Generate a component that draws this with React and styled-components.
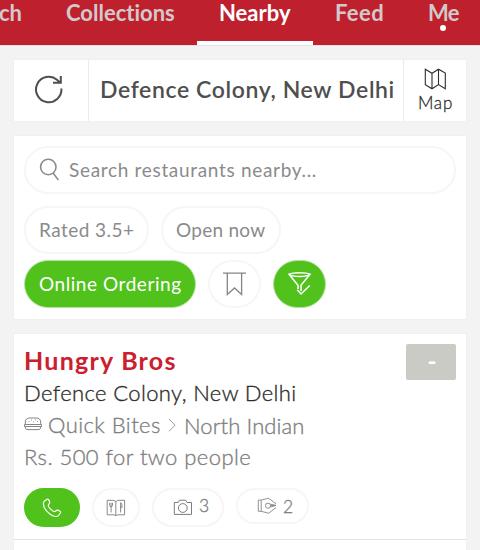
import React from 'react';
import styled, { createGlobalStyle } from 'styled-components';

const GlobalStyle = createGlobalStyle`
  * {
    box-sizing: border-box;
  }

  body {
    margin: 0;
    overflow: hidden;
    background: #f3f3f3;
    font-family: Lato, 'Liberation Sans', sans-serif;
    font-variant-ligatures: none;
  }

  svg {
    flex: none;
  }
`;

const Screen = styled.div`
  width: 480px;
  height: 550px;
  overflow: hidden;
`;

const NavBar = styled.nav`
  display: flex;
  height: 46px;
  background: #be212d;
  border-bottom: 1px solid #e2e2e2;
`;

const Tab = styled.a`
  position: relative;
  flex: none;
  width: ${({ width }) => width}px;
  height: 45px;
  padding-left: 22px;
  border-bottom: ${({ active }) => (active ? '4px solid #ffffff' : 'none')};
  color: ${({ active }) => (active ? '#ffffff' : '#d3c9cb')};
  font-size: 22px;
  font-weight: 700;
  line-height: 26px;
  letter-spacing: ${({ spacing }) => spacing || 0}px;
  white-space: nowrap;
`;

const CutTab = styled(Tab)`
  padding-left: 0;
  text-indent: -1px;
`;

const Dot = styled.span`
  position: absolute;
  top: 25px;
  left: 34px;
  width: 6px;
  height: 6px;
  border-radius: 50%;
  background: #ffffff;
`;

const Page = styled.main`
  display: flex;
  flex-direction: column;
  gap: 13px;
  padding: 13px 13px 0;
`;

const Card = styled.section`
  border: 1px solid #f0f0f0;
  background: #ffffff;
`;

const LocationBar = styled(Card)`
  display: flex;
  height: 63px;
`;

const Refresh = styled.button`
  display: flex;
  align-items: center;
  width: 75px;
  padding: 0 0 3px 19px;
  border: 0;
  border-right: 1px solid #ebebeb;
  background: none;
`;

const Place = styled.div`
  flex: 1;
  padding-left: 11px;
  color: #4f4f4f;
  font-size: 23px;
  font-weight: 600;
  line-height: 59px;
  letter-spacing: ${({ spacing }) => spacing}px;
  white-space: nowrap;
`;

const MapLink = styled.a`
  display: flex;
  flex-direction: column;
  align-items: center;
  width: 63px;
  padding: 7px 0 0 1px;
  border-left: 1px solid #ebebeb;
  color: #2d2d2a;
  font-size: 17px;
  font-weight: 300;
  line-height: 23px;
  letter-spacing: 0.8px;
  -webkit-text-stroke: 0.3px;
`;

const Filters = styled(Card)`
  display: flex;
  flex-direction: column;
  height: 185px;
  padding: 10px 10px 0;
`;

const SearchBox = styled.div`
  display: flex;
  align-items: center;
  height: 48px;
  margin-bottom: 12px;
  padding: 0 0 2px 13px;
  border: 2px solid #f6f6f6;
  border-radius: 24px;
  color: #8b8b8b;
  font-size: 19px;
  letter-spacing: ${({ spacing }) => spacing}px;

  svg {
    margin-right: 8px;
  }
`;

const ChipRow = styled.div`
  display: flex;
  gap: 12px;
  margin-bottom: 6px;
`;

const Chip = styled.button`
  display: flex;
  align-items: center;
  justify-content: ${({ icon }) => (icon ? 'center' : 'flex-start')};
  width: ${({ width }) => width}px;
  height: 48px;
  padding: ${({ icon, active }) => (icon ? 0 : `0 0 2px ${active ? 14 : 13}px`)};
  border: ${({ active }) => (active ? '1px solid #b5e3a0' : '2px solid #f6f6f6')};
  border-radius: 24px;
  background: ${({ active }) => (active ? '#51c21c' : '#ffffff')};
  color: ${({ active }) => (active ? '#ffffff' : '#8b8b8b')};
  font-family: inherit;
  font-size: 19px;
  letter-spacing: ${({ spacing }) => spacing || 0}px;
  white-space: nowrap;
`;

const Restaurant = styled(Card)`
  height: 230px;
`;

const Summary = styled.div`
  display: flex;
  justify-content: space-between;
  height: 146px;
  padding: 10px 10px 0;
`;

const Name = styled.h2`
  margin: 0;
  color: #cb202d;
  font-size: 25px;
  font-weight: 700;
  line-height: 32px;
  letter-spacing: ${({ spacing }) => spacing}px;
`;

const Line = styled.div`
  display: flex;
  align-items: center;
  height: 32px;
  color: ${({ dark }) => (dark ? '#2d2d2a' : '#808080')};
  font-size: 22px;
  font-weight: 300;
  letter-spacing: ${({ spacing }) => spacing || 0}px;
  white-space: nowrap;
  -webkit-text-stroke: 0.35px;
`;

const Category = styled.span`
  width: ${({ width }) => width}px;
  padding-top: ${({ drop }) => drop || 0}px;
  padding-left: ${({ indent }) => indent}px;
  letter-spacing: ${({ spacing }) => spacing}px;
`;

const Rating = styled.div`
  display: flex;
  align-items: center;
  justify-content: center;
  width: 50px;
  height: 36px;
  padding: 0 0 3px 2px;
  border-radius: 2px;
  background: #cbcbc6;
  color: #ffffff;
  font-size: 24px;
  font-weight: 700;
`;

const Actions = styled.div`
  display: flex;
  align-items: flex-start;
  gap: 12px;
  height: 60px;
  padding: 8px 10px 0;
  border-bottom: 1px solid #e3e3e3;
`;

const Action = styled.button`
  display: flex;
  align-items: center;
  justify-content: ${({ count }) => (count ? 'flex-start' : 'center')};
  gap: 6px;
  width: ${({ width }) => width}px;
  height: ${({ height }) => height || 39}px;
  padding: 0 0 0 ${({ count }) => (count ? 19 : 0)}px;
  border: ${({ primary }) => (primary ? 0 : '2px solid #f6f6f6')};
  border-radius: 20px;
  background: ${({ primary }) => (primary ? '#51c21c' : '#ffffff')};
`;

const Count = styled.span`
  padding-bottom: ${({ raised }) => (raised ? 4 : 0)}px;
  color: #808080;
  font-family: Lato, sans-serif;
  font-size: 17.5px;
  font-weight: 300;
  -webkit-text-stroke: 0.35px;
`;

const RefreshIcon = () => (
  <svg width="32" height="32" viewBox="0 0 32 32" fill="none" stroke="#50504b" strokeWidth="2">
    <path d="M28.4 15.5A12.7 12.7 0 1 1 24 6.8L27 9.5M27.8 3V9.8H20" />
  </svg>
);

const MapIcon = () => (
  <svg width="23" height="24" viewBox="0 0 23 24" fill="none" stroke="#2d2d2a" strokeWidth="1.1">
    <path d="M1.3 2.2L8 6.3L14.5 2.2L21.3 6V21.8L14.5 17.6L8 21.8L1.3 17.6ZM8 6.3V21.8M14.5 2.2V17.6" />
  </svg>
);

const SearchIcon = () => (
  <svg width="22" height="24" viewBox="0 0 22 24" fill="none" stroke="#8b8b8b" strokeWidth="1.6">
    <circle cx="9.3" cy="10" r="7.7" />
    <path d="M14 16.1L19.4 22.9" />
  </svg>
);

const BookmarkIcon = () => (
  <svg width="25" height="26" viewBox="0 0 25 26" fill="none" stroke="#858585" strokeWidth="1.3">
    <path d="M1 2.2H24M5.3 2.2V23.5L12.5 17L19.6 23.5V2.2" />
  </svg>
);

const FunnelIcon = () => (
  <svg width="25" height="26" viewBox="0 0 25 26" fill="none" stroke="#ffffff" strokeWidth="1.5">
    <path d="M2 3.2C6 1.2 19 1.2 23 3.2C19.5 6.2 5.5 6.2 2 3.2ZM2 3.2L11 14.3V18M23 3.2L14 14.3V20" />
    <path d="M10.3 18.8L14 23L22.7 14.5" />
  </svg>
);

const BurgerIcon = () => (
  <svg width="18" height="14" viewBox="0 0 18 14" fill="none" stroke="#858585">
    <path d="M1.3 7.5V5C1.3 2 3.5 1 6 1H12C14.5 1 16.7 2 16.7 5V7.5" />
    <path d="M.5 7.5H17.5V9.5H.5ZM1.3 9.5C1.3 12 2.2 12.6 4 12.6H14C15.8 12.6 16.7 12 16.7 9.5" />
    <path d="M4.5 4.5H5.5M7 3H8M9 5H10M11 3H12M13 4.5H14" strokeWidth=".8" />
  </svg>
);

const ChevronIcon = () => (
  <svg width="8" height="16" viewBox="0 0 8 16" fill="none" stroke="#929292" strokeWidth=".9">
    <path d="M1 3L7 9.2L1 15.4" />
  </svg>
);

const PhoneIcon = () => (
  <svg width="20" height="20" viewBox="0 0 20 20" fill="none" stroke="#ffffff" strokeWidth="1.2">
    <path d="M2.5 3L5 1.2C6 .7 7.4 2.1 7.7 4.2C8 5.7 6.2 6.3 6.2 7.5C6.3 9.3 10.5 13.5 12.4 13.6C13.6 13.7 14.1 12 15.6 12.2C17.6 12.5 19 14 18.4 15L16.5 17.5C15.3 19 11.8 19 8.2 16.3C4.5 13.5 1.3 9.2 1.4 5.6C1.4 4.4 1.8 3.5 2.5 3Z" />
  </svg>
);

const MenuIcon = () => (
  <svg width="20" height="18" viewBox="0 0 20 18" fill="none" stroke="#7c7c7c" strokeWidth=".9">
    <path d="M9.8 3C9 1.5 7.5 1.3 6 1.3H1.2V15.8H7C8.5 15.8 9.2 16 9.8 17C10.5 16 11 15.8 13 15.8H18.6V1.3H14C11.5 1.3 10.5 1.5 9.8 3V17" />
    <path d="M3.7 3.8V6.5Q3.7 7.7 5.1 7.7Q6.5 7.7 6.5 6.5V3.8M5.1 3.8V13.5M14.6 13.5V3.7C16 4.2 16.1 6.5 16 8.3H14.6" />
  </svg>
);

const CameraIcon = () => (
  <svg width="20" height="17" viewBox="0 0 20 17" fill="none" stroke="#7c7c7c">
    <path d="M1.3 3.5H5.2L6.5 1.2H12.7L14 3.5H18.5V15.4H1.3Z" />
    <circle cx="9.8" cy="9" r="4.4" />
  </svg>
);

const PenIcon = () => (
  <svg width="20" height="18" viewBox="0 0 20 18" fill="none" stroke="#858585" strokeWidth=".9">
    <path d="M1.3 3.1H4.2V14.3H1.3ZM4.2 3.1L11.5 1.2L19 6.8M4.2 14.3L11.5 16.2L19 10.7M13.5 7.2L19 8.4L13.5 10M13.5 8.5H19" />
    <circle cx="11" cy="8.7" r="2.6" />
  </svg>
);

const App = () => (
  <Screen>
    <GlobalStyle />
    <NavBar>
      <CutTab width={44}>ch</CutTab>
      <Tab width={153}>Collections</Tab>
      <Tab width={116} active>
        Nearby
      </Tab>
      <Tab width={93} spacing={0.4}>
        Feed
      </Tab>
      <Tab width={74} spacing={-0.8}>
        Me
        <Dot />
      </Tab>
    </NavBar>
    <Page>
      <LocationBar>
        <Refresh aria-label="Refresh">
          <RefreshIcon />
        </Refresh>
        <Place spacing={0.62}>Defence Colony, New Delhi</Place>
        <MapLink>
          <MapIcon />
          Map
        </MapLink>
      </LocationBar>
      <Filters>
        <SearchBox spacing={0.68}>
          <SearchIcon />
          Search restaurants nearby...
        </SearchBox>
        <ChipRow>
          <Chip width={125} spacing={0.45}>
            Rated 3.5+
          </Chip>
          <Chip width={120} spacing={0.25}>
            Open now
          </Chip>
        </ChipRow>
        <ChipRow>
          <Chip width={172} active spacing={0.55}>
            Online Ordering
          </Chip>
          <Chip width={53} icon="true" aria-label="Bookmarks">
            <BookmarkIcon />
          </Chip>
          <Chip width={53} icon="true" active aria-label="Filter">
            <FunnelIcon />
          </Chip>
        </ChipRow>
      </Filters>
      <Restaurant>
        <Summary>
          <div>
            <Name spacing={1.25}>Hungry Bros</Name>
            <Line dark spacing={0.38}>
              Defence Colony, New Delhi
            </Line>
            <Line>
              <BurgerIcon />
              <Category width={126} indent={6} spacing={0.45}>
                Quick Bites
              </Category>
              <ChevronIcon />
              <Category indent={8} drop={2} spacing={0.1}>
                North Indian
              </Category>
            </Line>
            <Line spacing={0.45}>Rs. 500 for two people</Line>
          </div>
          <Rating>-</Rating>
        </Summary>
        <Actions>
          <Action width={56} primary aria-label="Call">
            <PhoneIcon />
          </Action>
          <Action width={48} aria-label="Menu">
            <MenuIcon />
          </Action>
          <Action width={72} count="3">
            <CameraIcon />
            <Count raised>3</Count>
          </Action>
          <Action width={73} height={36} count="2">
            <PenIcon />
            <Count>2</Count>
          </Action>
        </Actions>
      </Restaurant>
    </Page>
  </Screen>
);

export default App;
